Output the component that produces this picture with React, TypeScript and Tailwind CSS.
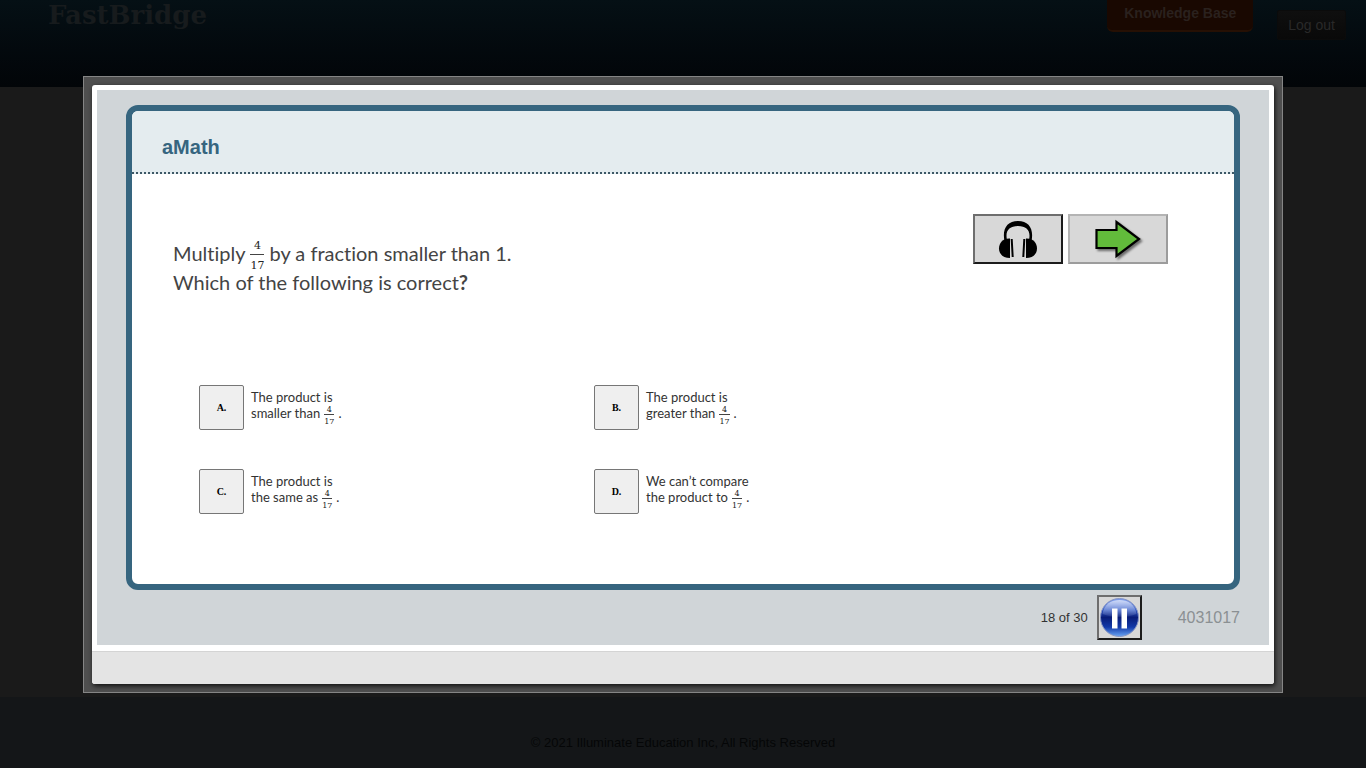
import { useState } from "react"

const choices = [
  { letter: "A.", first: "The product is", second: "smaller than" },
  { letter: "B.", first: "The product is", second: "greater than" },
  { letter: "C.", first: "The product is", second: "the same as" },
  { letter: "D.", first: "We can’t compare", second: "the product to" },
]

function Fraction({ large = false }: { large?: boolean }) {
  return (
    <span
      className={
        large
          ? "inline-flex flex-col items-center pt-1 font-['DejaVu_Serif',serif] text-[11px] leading-[17px] text-[#222]"
          : "inline-flex flex-col items-center font-['DejaVu_Serif',serif] text-[8px] leading-[9px] text-[#222]"
      }
    >
      <span className="w-full border-b border-[#444] px-px text-center">4</span>
      <span className="pt-0.5">17</span>
    </span>
  )
}

function HeadphonesIcon() {
  return (
    <svg width="40" height="40" viewBox="0 0 40 40" aria-hidden="true">
      <path
        d="M6.500 22C4 10 9 2 20 2S36 10 33.500 22L31 21C33 12 29 7 20 7S7 12 9 21Z"
        fill="#000"
      />
      <path d="M12 19.500C5 19 1 24 1 29.500s4 9.500 11 9.500Z" fill="#000" />
      <path d="M28 19.500C35 19 39 24 39 29.500s-4 9.500-11 9.500Z" fill="#000" />
      <path d="M13.700 20L14.700 38M26.300 20L25.300 38" stroke="#000" strokeWidth="2" />
    </svg>
  )
}

function ArrowIcon() {
  return (
    <svg width="50" height="42" viewBox="0 0 50 42" aria-hidden="true" className="drop-shadow-[2px_2px_1px_rgba(0,0,0,0.5)]">
      <path
        d="M3.500 12H23.500V4L46 21L23.500 38V30H3.500Z"
        fill="#62bb3b"
        stroke="#000"
        strokeWidth="2.200"
      />
    </svg>
  )
}

function PauseIcon() {
  return (
    <svg width="41" height="41" viewBox="0 0 41 41" aria-hidden="true">
      <defs>
        <linearGradient id="ball" x1="0" y1="0" x2="0" y2="1">
          <stop offset="0" stopColor="#7f9ff0" />
          <stop offset="0.3" stopColor="#2d55c4" />
          <stop offset="0.5" stopColor="#081c78" />
          <stop offset="0.75" stopColor="#1238a8" />
          <stop offset="1" stopColor="#6aa6f4" />
        </linearGradient>
        <linearGradient id="shine" x1="0" y1="0" x2="0" y2="1">
          <stop offset="0" stopColor="#fff" stopOpacity="0.65" />
          <stop offset="1" stopColor="#fff" stopOpacity="0.05" />
        </linearGradient>
      </defs>
      <circle cx="20.500" cy="20.500" r="19" fill="url(#ball)" stroke="#8795c4" />
      <path d="M3.500 17C5 7 12 3 20.500 3S36 7 37.500 17C28 21 13 21 3.500 17Z" fill="url(#shine)" />
      <rect x="13" y="11.500" width="5.500" height="20" fill="#fff" />
      <rect x="22.500" y="11.500" width="5.500" height="20" fill="#fff" />
    </svg>
  )
}

export default function App() {
  const [answer, setAnswer] = useState<string | null>(null)

  return (
    <div className="relative flex min-h-screen flex-col bg-[#1a1a1a] font-['Liberation_Sans',sans-serif]">

      {/* HEADER */}
      <header className="flex h-[87px] items-start justify-between bg-linear-to-b from-[#051015] to-[#020508] pr-5 pl-12">
        <div className="font-['DejaVu_Serif',serif] text-[26px] leading-[30px] font-bold text-[#171b1d]">
          FastBridge
        </div>
        <div className="flex items-start gap-6">
          <a
            href="#"
            className="rounded-b-md border-b-2 border-[#261004] bg-[#190801] px-[17px] pt-1 pb-2 text-sm leading-[18px] font-bold text-[#2a211e]"
          >
            Knowledge Base
          </a>
          <button className="mt-[10px] rounded-xs border border-[#0b0b0b] bg-linear-to-b from-[#0f0f0f] to-[#090909] px-[10px] py-1 text-sm leading-5 text-[#292929]">
            Log out
          </button>
        </div>
      </header>

      <div className="grow" />

      <footer className="bg-[#141618] pt-9 pb-[15px] text-center text-[13px] leading-5 text-[#050607]">
        © 2021 Illuminate Education Inc, All Rights Reserved
      </footer>

      {/* TEST DIALOG */}
      <div className="absolute inset-0 flex items-start justify-center pt-[76px]">
        <div role="dialog" aria-label="aMath" className="w-full max-w-[1200px] border border-[#858585] bg-[#4f4f4f] p-2">
          <div className="rounded-[3px] bg-white shadow-[1px_2px_5px_rgba(0,0,0,0.8)]">
            <div className="px-[5px] pt-[5px] pb-[6px]">
              <div className="bg-[#d0d5d8] px-[29px] pt-[15px] pb-[5px]">

                <main className="overflow-hidden rounded-xl border-6 border-[#36657f] bg-white">
                  <h1 className="border-b-2 border-dotted border-[#3d5866] bg-[#e4ecef] px-[30px] pt-[22px] pb-[11px] text-xl font-bold text-[#36657f]">
                    aMath
                  </h1>

                  <div className="pt-10 pr-[66px] pb-[70px] pl-[41px]">
                    <div className="flex items-start justify-between">
                      <div className="pt-6 font-[Lato,sans-serif] text-xl leading-[29px] text-[#444] [font-variant-ligatures:none]">
                        <p className="flex h-[30px] items-center gap-[5px]">
                          <span>Multiply</span>
                          <Fraction large />
                          <span>by a fraction smaller than 1.</span>
                        </p>
                        <p>
                          Which of the following is correct<b>?</b>
                        </p>
                      </div>
                      <div className="flex gap-[5px]">
                        <button
                          aria-label="Listen"
                          className="flex h-[50px] w-[90px] items-center justify-center border-2 border-t-[#6e6e6e] border-r-[#1c1c1c] border-b-[#1c1c1c] border-l-[#6e6e6e] bg-[#d8d8d8]"
                        >
                          <HeadphonesIcon />
                        </button>
                        <button
                          aria-label="Next"
                          className="flex h-[50px] w-[100px] items-center justify-center border-2 border-t-[#b4b4b4] border-r-[#9c9c9c] border-b-[#9c9c9c] border-l-[#b4b4b4] bg-[#d8d8d8]"
                        >
                          <ArrowIcon />
                        </button>
                      </div>
                    </div>

                    <div className="grid grid-cols-[395px_1fr] gap-y-[39px] pt-[88px] pl-[26px]">
                      {choices.map((choice) => (
                        <div key={choice.letter} className="flex h-[45px] items-start gap-[7px]">
                          <button
                            onClick={() => setAnswer(choice.letter)}
                            aria-pressed={answer === choice.letter}
                            className="size-[45px] rounded-xs border border-[#767676] bg-[#efefef] font-['Liberation_Serif',serif] text-[10px] font-bold text-black"
                          >
                            {choice.letter}
                          </button>
                          <div className="pt-1 font-[Lato,sans-serif] text-[13px] leading-4 text-[#333]">
                            <p>{choice.first}</p>
                            <p className="flex h-4 items-start gap-1">
                              <span>{choice.second}</span>
                              <Fraction />
                              <span>.</span>
                            </p>
                          </div>
                        </div>
                      ))}
                    </div>
                  </div>
                </main>

                <div className="flex items-center justify-end pt-[5px]">
                  <span className="pr-[9px] text-[13px] text-[#333]">18 of 30</span>
                  <button
                    aria-label="Pause"
                    className="flex size-[45px] items-center justify-center border-2 border-t-[#6e6e6e] border-r-[#1c1c1c] border-b-[#1c1c1c] border-l-[#6e6e6e] bg-[#d8d8d8]"
                  >
                    <PauseIcon />
                  </button>
                  <span className="pl-9 text-base text-[#8b9093]">4031017</span>
                </div>
              </div>
            </div>
            <div className="h-[33px] rounded-b-[3px] border-t border-[#d4d4d4] bg-[#e4e4e4]" />
          </div>
        </div>
      </div>

    </div>
  )
}
